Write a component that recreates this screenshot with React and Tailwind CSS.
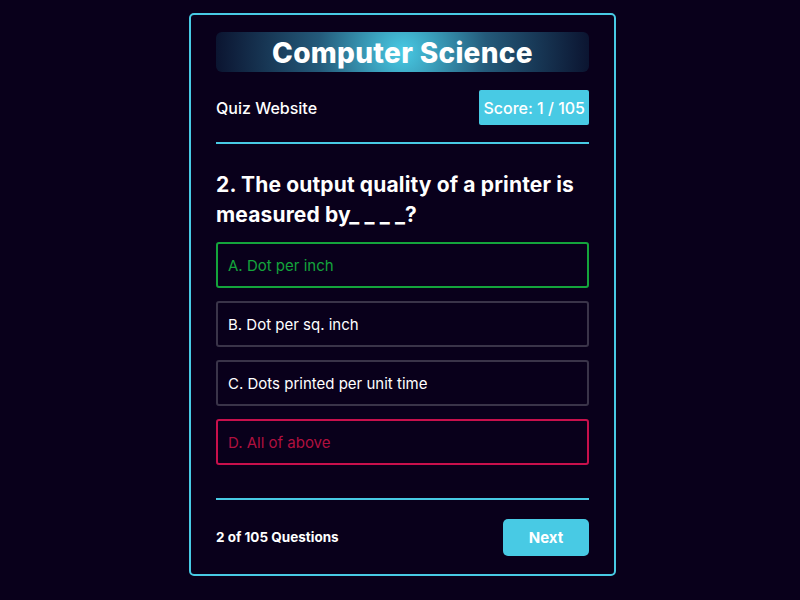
const options = [
  { label: 'A. Dot per inch', state: 'correct' },
  { label: 'B. Dot per sq. inch', state: 'idle' },
  { label: 'C. Dots printed per unit time', state: 'idle' },
  { label: 'D. All of above', state: 'wrong' },
];

const optionStyles = {
  correct: 'border-[#14a43c] text-[#14a43c]',
  wrong: 'border-[#c8104c] text-[#b0103f]',
  idle: 'border-[#3a3449] text-white',
};

export default function App() {
  return (
    <div
      className="min-h-[600px] w-full bg-[#09001b] flex justify-center pl-[5px] pt-[13px]"
      style={{ fontFamily: 'Inter, "Noto Sans", sans-serif' }}
    >
      <div className="w-[427px] h-[563px] border-2 border-[#48cae4] rounded-[5px] px-[25px] pt-[17px] pb-[17px] flex flex-col">
        <div className="h-[40px] rounded-[6px] bg-[radial-gradient(circle,#48cae4_0%,#245a7a_45%,#0b1430_100%)] flex items-center justify-center">
          <h1 className="text-[28px] font-extrabold text-white tracking-[0.3px] translate-y-[1px]">Computer Science</h1>
        </div>

        <div className="mt-[18px] flex items-center justify-between">
          <span className="text-[16px] font-medium text-white">Quiz Website</span>
          <span className="h-[35px] px-[4px] bg-[#48cae4] rounded-[2px] text-white text-[16px] font-medium flex items-center">
            Score: 1 / 105
          </span>
        </div>

        <div className="mt-[17px] h-[2px] bg-[#48cae4]" />

        <h2 className="mt-[26px] text-[21px] leading-[30px] font-bold text-white tracking-[0.15px]">
          2. The output quality of a printer is measured by_ _ _ _?
        </h2>

        <div className="mt-[12px] flex flex-col gap-[13px]">
          {options.map((o) => (
            <div
              key={o.label}
              className={`h-[46px] border-2 rounded-[3px] pl-[10px] pt-[2px] flex items-center text-[15px] ${optionStyles[o.state]}`}
            >
              {o.label}
            </div>
          ))}
        </div>

        <div className="mt-[33px] h-[2px] bg-[#48cae4]" />

        <div className="mt-[19px] flex items-center justify-between">
          <span className="text-[13.5px] font-bold text-white">2 of 105 Questions</span>
          <button className="w-[86px] h-[37px] rounded-[5px] bg-[#48cae4] text-white text-[15px] font-bold pt-[1px]">
            Next
          </button>
        </div>
      </div>
    </div>
  );
}
